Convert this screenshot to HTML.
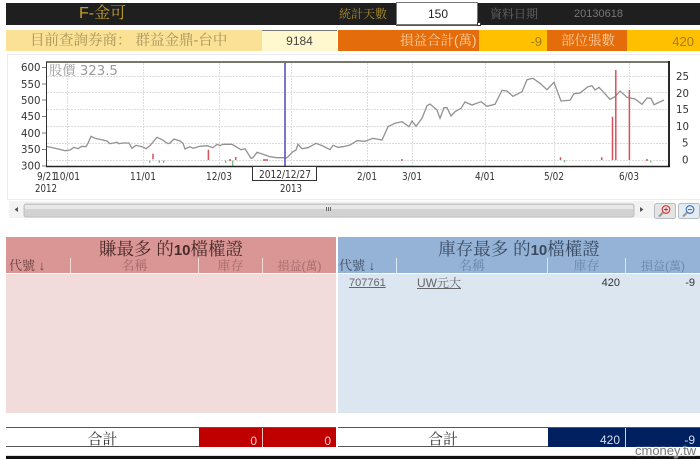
<!DOCTYPE html>
<html><head><meta charset="utf-8"><style>
html,body{margin:0;padding:0;background:#fff;width:700px;height:459px;overflow:hidden}
body{position:relative;font-family:"Liberation Sans","Noto Serif CJK SC",serif;filter:blur(.3px)}
.b{position:absolute}
.t{position:absolute;white-space:nowrap;line-height:1}
.ctr{text-align:center}
.r{text-align:right}
svg text{font-family:"DejaVu Sans",sans-serif;font-size:10.5px;fill:#333}
</style></head><body>
<!-- top bar -->
<div class="b" style="left:6px;top:3px;width:694px;height:22px;background:#1f1f1f"></div>
<div class="t" style="left:79px;top:6px;font-size:16px;color:#c29f2c">F-金可</div>
<div class="t" style="left:339px;top:8px;font-size:12px;color:#a8892c">統計天數</div>
<div class="b" style="left:396px;top:2px;width:80px;height:21px;background:#fff;border:1px solid #777;box-shadow:0 1px 0 #555"></div>
<div class="t ctr" style="left:397px;top:8px;width:82px;font-size:12px;color:#222">150</div>
<div class="b" style="left:477px;top:22px;width:4px;height:4px;background:#fff;border:1px solid #333;box-sizing:border-box"></div>
<div class="t" style="left:490px;top:8px;font-size:12px;color:#666">資料日期</div>
<div class="t" style="left:574px;top:9px;font-size:11px;color:#777">20130618</div>
<!-- second row -->
<div class="b" style="left:6px;top:30px;width:256px;height:21px;background:#fbe195"></div>
<div class="t" style="left:30px;top:34px;font-size:14.500px;color:#a8945a">目前查詢券商： 群益金鼎-台中</div>
<div class="b" style="left:262px;top:30px;width:75px;height:21px;background:#fff8cf;box-shadow:inset 0 1px 0 #777"></div>
<div class="t ctr" style="left:262px;top:35px;width:75px;font-size:12px;color:#444">9184</div>
<div class="b" style="left:338px;top:30px;width:141px;height:21px;background:#e46c0a"></div>
<div class="t" style="left:400px;top:34px;font-size:13.500px;color:#fbd0a0">損益合計(萬)</div>
<div class="b" style="left:479px;top:30px;width:68px;height:21px;background:#ffc000"></div>
<div class="t r" style="left:479px;top:35px;width:63px;font-size:13px;color:#a57c1a">-9</div>
<div class="b" style="left:547px;top:30px;width:80px;height:21px;background:#e46c0a"></div>
<div class="t" style="left:561px;top:34px;font-size:13.500px;color:#fbd0a0">部位張數</div>
<div class="b" style="left:627px;top:30px;width:73px;height:21px;background:#ffc000"></div>
<div class="t r" style="left:627px;top:35px;width:67px;font-size:13px;color:#a57c1a">420</div>
<!-- chart -->
<div class="b" style="left:7px;top:54px;width:693px;height:146px;border-left:1px solid #e8edf3;border-top:1px solid #e8edf3;border-bottom:1px solid #e8edf3;box-sizing:border-box"></div>
<svg class="b" style="left:0;top:0" width="700" height="225" viewBox="0 0 700 225">
<g stroke="#dcdcdc" stroke-width="1" stroke-dasharray="2 1" fill="none">
<path d="M47 76.500H668M47 92.500H668M47 109.500H668M47 126.500H668M47 143.500H668M47 160.500H668"/>
<path d="M67.500 63V166M143.500 63V166M219.500 63V166M291.500 63V166M367.500 63V166M412.500 63V166M485.500 63V166M554.500 63V166M629.500 63V166"/>
</g>
<path fill="none" stroke="#929292" stroke-width="1.300" d="M46 146.300L57 148.700L65 150.700L70 150L74 147.300L78 148.700L82 146.300L86 146.700L88 143.300L91 136.300L95 138.300L107 141L110 143.700L117 142.300L119 143.700L123 143L129 143L132 148.300L136 145.300L142 146.700L146 148.700L150 145.700L157 137.300L162 139.700L168 143.700L170 143L174 139L180 141L183 143.300L185 149L190 146.700L193 148.300L200 146.300L207 145.700L213 147.700L217 144.300L220 145.700L223 144.300L232 144.300L241 149.700L245 148.700L251 158.300L253 157.700L257 152.300L265 155L270 156.700L277 157.700L287 157.700L293 151.700L296 150L298 144.300L302 148.700L308 147.700L316 143.300L323 146L330 149.700L333 145.300L338 147.300L343 146.700L350 145L357 140.700L365 141.300L373 138.300L382 140L388 126.700L395 123.300L402 121.700L409 126.700L412 121L416 126.300L422 118.300L427 105.700L430 104L437 110L440 118.300L444 107.700L447 107.700L451 116L455 111.700L461 108.300L465 102L472 105L481 101.700L487 106.300L495 104.300L502 90.300L507 91L513 96.300L522 91.700L527 79.700L533 78.300L540 83.300L547 89.700L554 82.300L561 101L570 100.300L574 93.700L580 93L588 86.700L592 85.700L595 90L599 87.300L610 99.300L615 96.700L620 91L627 97.300L635 99L642 104.300L647 98L651 98.300L654 104.700L664 100"/>
<g stroke="#d9505a" stroke-width="1.500" fill="none">
<path d="M612.500 116.700V160M615.800 70V160M629.400 90V160M560.500 157.300V160M601.700 157.300V160M401 160H403M646 160H648M153 153.700V159.300M208.400 149.700V160M235.700 157V160M263 160H268M229 160H231"/>
</g>
<g stroke="#7bb27b" stroke-width="1.200" fill="none">
<path d="M564.700 160V162.500M650.700 160.500V162.500M149.700 160.500V163M159.300 160.500V163M163.700 160.500V163M225.700 160.500V163M232.700 160.500V166"/>
</g>
<path d="M285 62V166" stroke="#5656b8" stroke-width="1.600"/>
<path d="M46 62H669" stroke="#77776a" stroke-width="2"/>
<path d="M46.500 62V167" stroke="#333" stroke-width="1"/>
<path d="M46 166.500H670" stroke="#222" stroke-width="1.500"/>
<path d="M669 61V167" stroke="#111" stroke-width="1.800"/>
<g text-anchor="end">
<text x="40.500" y="71" textLength="19.500" lengthAdjust="spacingAndGlyphs">600</text><text x="40.500" y="88" textLength="19.500" lengthAdjust="spacingAndGlyphs">550</text><text x="40.500" y="104" textLength="19.500" lengthAdjust="spacingAndGlyphs">500</text><text x="40.500" y="120" textLength="19.500" lengthAdjust="spacingAndGlyphs">450</text><text x="40.500" y="137" textLength="19.500" lengthAdjust="spacingAndGlyphs">400</text><text x="40.500" y="153" textLength="19.500" lengthAdjust="spacingAndGlyphs">350</text><text x="40.500" y="169.500" textLength="19.500" lengthAdjust="spacingAndGlyphs">300</text>
</g>
<path d="M42 67.500H46M42 84H46M42 100H46M42 116.500H46M42 133H46M42 149.500H46M42 166H46" stroke="#555" stroke-width=".7"/>
<g>
<text x="676" y="80" textLength="13" lengthAdjust="spacingAndGlyphs">25</text><text x="676" y="97" textLength="13" lengthAdjust="spacingAndGlyphs">20</text><text x="676" y="113" textLength="13" lengthAdjust="spacingAndGlyphs">15</text><text x="676" y="130" textLength="13" lengthAdjust="spacingAndGlyphs">10</text><text x="682" y="146.500" textLength="6.500" lengthAdjust="spacingAndGlyphs">5</text><text x="682" y="163.500" textLength="6.500" lengthAdjust="spacingAndGlyphs">0</text>
</g>
<g text-anchor="middle">
<text x="47" y="180" textLength="20" lengthAdjust="spacingAndGlyphs">9/21</text><text x="67" y="180" textLength="26" lengthAdjust="spacingAndGlyphs">10/01</text><text x="143" y="180" textLength="26" lengthAdjust="spacingAndGlyphs">11/01</text><text x="219" y="180" textLength="26" lengthAdjust="spacingAndGlyphs">12/03</text>
<text x="367" y="180" textLength="20" lengthAdjust="spacingAndGlyphs">2/01</text><text x="412" y="180" textLength="20" lengthAdjust="spacingAndGlyphs">3/01</text><text x="485" y="180" textLength="20" lengthAdjust="spacingAndGlyphs">4/01</text><text x="554" y="180" textLength="20" lengthAdjust="spacingAndGlyphs">5/02</text><text x="629" y="180" textLength="20" lengthAdjust="spacingAndGlyphs">6/03</text>
<text x="46" y="192" textLength="22" lengthAdjust="spacingAndGlyphs">2012</text><text x="291" y="192" textLength="22" lengthAdjust="spacingAndGlyphs">2013</text>
</g>
<rect x="252.500" y="166.500" width="64" height="14" fill="#fff" stroke="#333"/>
<text x="285" y="178" text-anchor="middle" textLength="52" lengthAdjust="spacingAndGlyphs">2012/12/27</text>
<text x="49" y="75" style="font-size:13.300px;fill:#9a9a9a;font-family:'DejaVu Sans','Noto Serif CJK SC',serif">股價 323.5</text>
<!-- scrollbar -->
<rect x="9" y="201" width="645" height="17" fill="#f3f3f3"/>
<path d="M18 207L14.500 209.500L18 212Z" fill="#555"/>
<rect x="24" y="204" width="610" height="13" rx="2" fill="#d2d2d2" stroke="#bfbfbf"/>
<rect x="25" y="205" width="608" height="4" fill="#e8e8e8"/>
<path d="M326.500 207V211M328.500 207V211M330.500 207V211" stroke="#666"/>
<path d="M640 207L643.500 209.500L640 212Z" fill="#555"/>
<rect x="654.500" y="203.500" width="21" height="15" rx="2" fill="#e4e4e4" stroke="#b5bcc4"/>
<rect x="678.500" y="203.500" width="21" height="15" rx="2" fill="#e4ebf2" stroke="#b5bcc4"/>
<circle cx="666" cy="209.500" r="3.800" fill="#f7e3e3" stroke="#c33" stroke-width="1.100"/>
<path d="M664 209.500H668M666 207.500V211.500" stroke="#c33" stroke-width="1"/>
<path d="M663 212.500L659 216.500" stroke="#999" stroke-width="2"/>
<circle cx="690" cy="209.500" r="3.800" fill="#e3ecf7" stroke="#3a6fb5" stroke-width="1.100"/>
<path d="M688 209.500H692" stroke="#3a6fb5" stroke-width="1"/>
<path d="M687 212.500L683 216.500" stroke="#999" stroke-width="2"/>
</svg>
<!-- left table -->
<div class="b" style="left:6px;top:237px;width:330px;height:36px;background:#d99694"></div>
<div class="t ctr" style="left:6px;top:241px;width:330px;font-size:17.500px;color:#4a2a2a">賺最多 的<b style="font-size:15px">10</b>檔權證</div>
<div class="b" style="left:70px;top:258px;width:1px;height:15px;background:#f2dcdb"></div>
<div class="b" style="left:198px;top:258px;width:1px;height:15px;background:#f2dcdb"></div>
<div class="b" style="left:262px;top:258px;width:1px;height:15px;background:#f2dcdb"></div>
<div class="t" style="left:9px;top:259px;font-size:13px;color:#6b4040">代號 ↓</div>
<div class="t ctr" style="left:71px;top:259px;width:127px;font-size:13px;color:#a56a6a">名稱</div>
<div class="t ctr" style="left:199px;top:259px;width:63px;font-size:13px;color:#a56a6a">庫存</div>
<div class="t ctr" style="left:263px;top:260px;width:73px;font-size:12px;color:#a56a6a">損益(萬)</div>
<div class="b" style="left:6px;top:274px;width:330px;height:139px;background:#f2dcdb"></div>
<!-- right table -->
<div class="b" style="left:338px;top:237px;width:362px;height:36px;background:#95b3d7"></div>
<div class="t ctr" style="left:338px;top:241px;width:362px;font-size:17.500px;color:#3a4a60">庫存最多 的<b style="font-size:15px">10</b>檔權證</div>
<div class="b" style="left:396px;top:258px;width:1px;height:15px;background:#dce6f1"></div>
<div class="b" style="left:547px;top:258px;width:1px;height:15px;background:#dce6f1"></div>
<div class="b" style="left:625px;top:258px;width:1px;height:15px;background:#dce6f1"></div>
<div class="t" style="left:339px;top:259px;font-size:13px;color:#3f4f63">代號 ↓</div>
<div class="t ctr" style="left:397px;top:259px;width:150px;font-size:13px;color:#6686ab">名稱</div>
<div class="t ctr" style="left:548px;top:259px;width:77px;font-size:13px;color:#6686ab">庫存</div>
<div class="t ctr" style="left:626px;top:260px;width:74px;font-size:12px;color:#6686ab">損益(萬)</div>
<div class="b" style="left:338px;top:274px;width:362px;height:139px;background:#dce6f1"></div>
<div class="t" style="left:349px;top:278px;font-size:11px;color:#666;text-decoration:underline">707761</div>
<div class="t" style="left:417px;top:277px;font-size:12px;color:#666;text-decoration:underline">UW元大</div>
<div class="t r" style="left:560px;top:278px;width:60px;font-size:11px;color:#333">420</div>
<div class="t r" style="left:640px;top:278px;width:55px;font-size:11px;color:#333">-9</div>
<!-- totals -->
<div class="t ctr" style="left:6px;top:432px;width:193px;font-size:15px;color:#333">合計</div>
<div class="t ctr" style="left:338px;top:432px;width:210px;font-size:15px;color:#333">合計</div>
<div class="b" style="left:6px;top:427px;width:330px;height:1px;background:#555"></div>
<div class="b" style="left:6px;top:446px;width:330px;height:1px;background:#555"></div>
<div class="b" style="left:199px;top:428px;width:137px;height:19px;background:#c00000"></div>
<div class="b" style="left:262px;top:428px;width:1px;height:19px;background:#f2c0c0"></div>
<div class="t r" style="left:199px;top:435px;width:58px;font-size:12px;color:#f0d0d0">0</div>
<div class="t r" style="left:263px;top:435px;width:68px;font-size:12px;color:#f0d0d0">0</div>
<div class="b" style="left:338px;top:427px;width:362px;height:1px;background:#555"></div>
<div class="b" style="left:338px;top:446px;width:362px;height:1px;background:#555"></div>
<div class="b" style="left:548px;top:428px;width:152px;height:19px;background:#002060"></div>
<div class="b" style="left:625px;top:428px;width:1px;height:19px;background:#c8d4e8"></div>
<div class="t r" style="left:560px;top:434px;width:60px;font-size:12px;color:#d5deee">420</div>
<div class="t r" style="left:640px;top:434px;width:55px;font-size:12px;color:#d5deee">-9</div>
<div class="b" style="left:6px;top:455px;width:694px;height:1px;background:#f7d9b8"></div>
<div class="b" style="left:6px;top:456px;width:694px;height:3px;background:#111"></div>
<div class="t" style="left:635px;top:444px;font-size:13px;color:#777;text-shadow:0 0 2px #fff,0 0 2px #fff,0 0 2px #fff">cmoney.tw</div>
</body></html>
